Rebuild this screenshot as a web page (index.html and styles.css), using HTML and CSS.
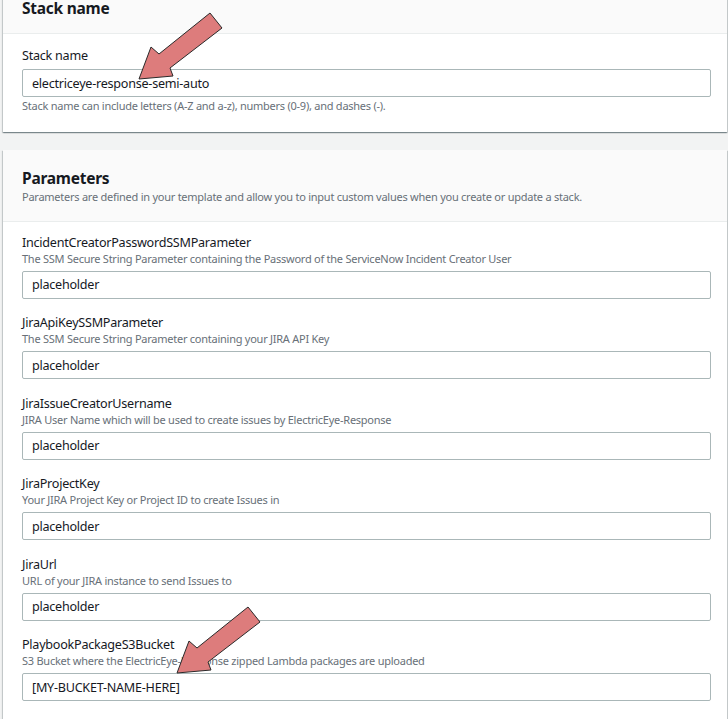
FILE: index.html
```html
<!DOCTYPE html>
<html lang="en">
<head>
<meta charset="utf-8">
<title>Create stack - Specify stack details</title>
<link rel="stylesheet" href="styles.css">
</head>
<body>
<main class="page">
  <section class="card card-stack">
    <header class="card-header card-header-short">
      <h2 class="card-title">Stack name</h2>
    </header>
    <div class="card-body card-body-stack">
      <div class="field">
        <label class="field-label" for="stack-name">Stack name</label>
        <input class="field-input" id="stack-name" type="text" value="electriceye-response-semi-auto">
        <p class="field-help">Stack name can include letters (A-Z and a-z), numbers (0-9), and dashes (-).</p>
      </div>
    </div>
  </section>

  <section class="card">
    <header class="card-header">
      <h2 class="card-title">Parameters</h2>
      <p class="card-desc">Parameters are defined in your template and allow you to input custom values when you create or update a stack.</p>
    </header>
    <div class="card-body">
      <div class="field">
        <label class="field-label" for="p1">IncidentCreatorPasswordSSMParameter</label>
        <p class="field-desc">The SSM Secure String Parameter containing the Password of the ServiceNow Incident Creator User</p>
        <input class="field-input" id="p1" type="text" value="placeholder">
      </div>
      <div class="field">
        <label class="field-label" for="p2">JiraApiKeySSMParameter</label>
        <p class="field-desc">The SSM Secure String Parameter containing your JIRA API Key</p>
        <input class="field-input" id="p2" type="text" value="placeholder">
      </div>
      <div class="field">
        <label class="field-label" for="p3">JiraIssueCreatorUsername</label>
        <p class="field-desc">JIRA User Name which will be used to create issues by ElectricEye-Response</p>
        <input class="field-input" id="p3" type="text" value="placeholder">
      </div>
      <div class="field">
        <label class="field-label" for="p4">JiraProjectKey</label>
        <p class="field-desc">Your JIRA Project Key or Project ID to create Issues in</p>
        <input class="field-input" id="p4" type="text" value="placeholder">
      </div>
      <div class="field">
        <label class="field-label" for="p5">JiraUrl</label>
        <p class="field-desc">URL of your JIRA instance to send Issues to</p>
        <input class="field-input" id="p5" type="text" value="placeholder">
      </div>
      <div class="field">
        <label class="field-label" for="p6">PlaybookPackageS3Bucket</label>
        <p class="field-desc">S3 Bucket where the ElectricEye-Response zipped Lambda packages are uploaded</p>
        <input class="field-input" id="p6" type="text" value="[MY-BUCKET-NAME-HERE]">
      </div>
    </div>
  </section>
</main>

<svg class="arrow arrow-top" viewBox="0 0 100 85" width="100" height="85" aria-hidden="true">
  <polygon points="9,74 21,42 29,49 80,8 92,23 40,63 43,71" />
</svg>
<svg class="arrow arrow-bottom" viewBox="0 0 100 85" width="100" height="85" aria-hidden="true">
  <polygon points="9,74 21,42 29,49 80,8 92,23 40,63 43,71" />
</svg>
</body>
</html>
```

FILE: styles.css
```css
* {
  box-sizing: border-box;
}

html, body {
  margin: 0;
  padding: 0;
}

body {
  position: relative;
  background: #f2f3f3;
  font-family: "Noto Sans", "Open Sans", "Liberation Sans", sans-serif;
  color: #16191f;
  height: 719px;
  overflow: hidden;
}

.page {
  display: flex;
  flex-direction: column;
  gap: 18px;
  padding: 0 1px 0 3px;
  margin-top: -17px;
}

.card {
  background: #ffffff;
  box-shadow: 0 1px 1px 0 rgba(0, 28, 36, 0.3), 1px 1px 1px 0 rgba(0, 28, 36, 0.15), -1px 1px 1px 0 rgba(0, 28, 36, 0.15);
}

.card-header {
  background: #fafafa;
  border-bottom: 1px solid #eaeded;
  padding: 17px 19px 17px;
}

.card-title {
  margin: 0;
  font-size: 15.5px;
  line-height: 22px;
  font-weight: 700;
  letter-spacing: -0.25px;
}

.card-header-short .card-title {
  line-height: 16px;
}

.card-desc {
  margin: 0;
  font-size: 11px;
  line-height: 15px;
  letter-spacing: -0.25px;
  color: #687078;
}

.card-body {
  padding: 12.5px 16px 40px 19px;
  display: flex;
  flex-direction: column;
  gap: 16.6px;
}

.card-body-stack {
  padding-top: 14px;
  padding-bottom: 19px;
}

.field {
  display: flex;
  flex-direction: column;
}

.field-label {
  font-size: 12.6px;
  line-height: 16px;
  letter-spacing: -0.25px;
}

.field-desc {
  margin: 0;
  font-size: 11px;
  line-height: 15px;
  letter-spacing: -0.25px;
  color: #687078;
}

.field-input {
  margin-top: 5px;
  height: 28px;
  width: 100%;
  border: 1px solid #aab7b8;
  border-radius: 2px;
  padding: 0 9px;
  font-family: inherit;
  font-size: 12.6px;
  letter-spacing: -0.25px;
  color: #16191f;
  background: #fff;
}

.field-help {
  margin: 2px 0 0;
  font-size: 11px;
  line-height: 14px;
  letter-spacing: -0.25px;
  color: #687078;
}

.arrow {
  position: absolute;
  overflow: visible;
}

.arrow polygon {
  fill: #dd7c7c;
  stroke: #2a2a2a;
  stroke-width: 1;
  stroke-linejoin: miter;
}

.arrow-top {
  left: 130px;
  top: 5px;
}

.arrow-bottom {
  left: 168px;
  top: 599px;
}
```
